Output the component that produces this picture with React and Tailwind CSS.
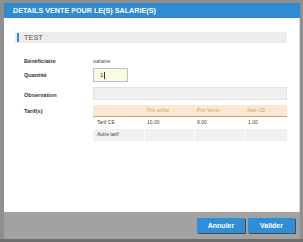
export default function App() {
  const font = { fontFamily: '"Liberation Sans", Arial, sans-serif' };
  return (
    <div className="w-[303px] h-[242px] bg-[#8f8f8f] pt-[3px] pl-[4px] overflow-hidden" style={font}>
      <div className="w-[296px] flex flex-col">
        <div className="h-[15px] bg-[#2f8bd3] flex items-center pl-[9px]">
          <span className="text-white font-bold text-[7.2px] leading-none tracking-[0px]">DETAILS VENTE POUR LE(S) SALARIE(S)</span>
        </div>
        <div className="h-[194px] bg-white border-r border-[#d8d8d8] pt-[14px] pl-[11px] pr-[12px]">
          <div className="h-[11px] bg-[#ececec] flex items-center pl-[2px]">
            <div className="w-[2px] h-[9px] bg-[#2f8bd3]"></div>
            <span className="ml-[5px] text-[7.4px] leading-none text-[#555]">TEST</span>
          </div>
          <div className="pl-[9px]">
            <div className="mt-[14px] h-[9px] flex items-center">
              <div className="w-[69px] text-[5.6px] font-bold text-[#333]">Bénéficiaire</div>
              <div className="text-[6px] text-[#555]">salarie</div>
            </div>
            <div className="mt-[2px] h-[14px] flex items-center">
              <div className="w-[69px] text-[5.6px] font-bold text-[#333]">Quantité</div>
              <div className="w-[35px] h-[14px] bg-[#fbfbe4] border border-[#b9c0cc] flex items-center pl-[6px]">
                <span className="text-[6px] text-[#333]">1</span>
                <span className="w-[1px] h-[7px] bg-[#333] ml-[0.5px]"></span>
              </div>
            </div>
            <div className="mt-[5px] h-[13px] flex items-end">
              <div className="w-[69px] text-[5.6px] font-bold text-[#333] leading-none pb-[1px]">Observation</div>
              <div className="w-[194px] h-[13px] bg-[#efefef] border border-[#e2e2e2]"></div>
            </div>
            <div className="mt-[5px] flex items-start">
              <div className="w-[69px] h-[12px] flex items-center text-[5.6px] font-bold text-[#333]">Tarif(s)</div>
              <div className="w-[194px] text-[5px] text-[#444]">
                <div className="h-[12px] bg-[#fbe8d4] border-b border-[#e69d4e] flex items-center text-[#d9a36b]">
                  <div className="w-[52px]"></div>
                  <div className="w-[50px] pl-[2px]">Prix achat</div>
                  <div className="w-[50px] pl-[2px]">Prix Vente</div>
                  <div className="w-[42px] pl-[2px]">Aide CE</div>
                </div>
                <div className="h-[12px] bg-white flex items-center">
                  <div className="w-[52px] pl-[4px]">Tarif CE</div>
                  <div className="w-[50px] pl-[2px]">10.00</div>
                  <div className="w-[50px] pl-[2px]">9.00</div>
                  <div className="w-[42px] pl-[3px]">1.00</div>
                </div>
                <div className="h-[12px] bg-[#f0f0f0] flex items-stretch">
                  <div className="w-[52px] pl-[4px] flex items-center border-r border-white">Autre tarif</div>
                  <div className="w-[50px] border-r border-white"></div>
                  <div className="w-[50px] border-r border-white"></div>
                  <div className="w-[42px]"></div>
                </div>
              </div>
            </div>
          </div>
        </div>
        <div className="h-[27px] bg-[#a2a2a2] flex justify-end items-start pt-[6px] pr-[5px] gap-[3px]">
          <button className="w-[48px] h-[15px] bg-[#2e8fd8] text-white font-bold text-[7px] leading-none shadow-[1px_1px_0_#4a4a4a]">Annuler</button>
          <button className="w-[47px] h-[15px] bg-[#2e8fd8] text-white font-bold text-[7px] leading-none shadow-[1px_1px_0_#4a4a4a]">Valider</button>
        </div>
      </div>
      <div className="h-[3px] bg-[#6e6e6e] -ml-[4px] w-[303px]"></div>
    </div>
  );
}
